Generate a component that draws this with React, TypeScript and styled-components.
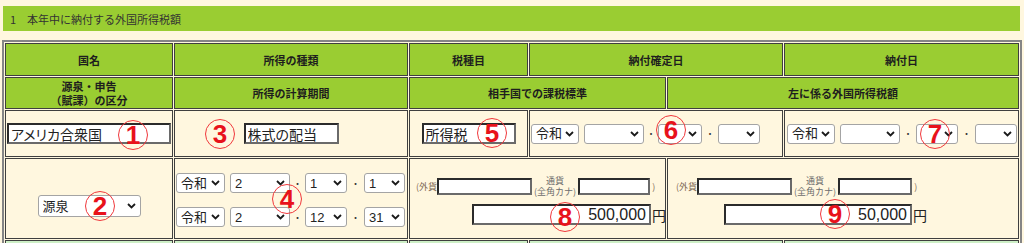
import React from "react";
import styled, { createGlobalStyle } from "styled-components";

const GlobalStyle = createGlobalStyle`
  body {
    margin: 0;
    background: #fff7df;
    color: #222;
    font-family: "Liberation Sans", "Noto Sans CJK JP", sans-serif;
  }
`;

const Page = styled.div`
  padding-top: 6px;
`;

const SectionBar = styled.div`
  box-sizing: border-box;
  margin-left: 3px;
  width: 1017px;
  height: 25px;
  padding-left: 7px;
  display: flex;
  align-items: center;
  background: #9acd32;
  color: #333;
  font: 11px "Noto Sans CJK JP", sans-serif;
`;

const Grid = styled.div`
  margin: 9px 0 0 2px;
  width: 1014px;
  display: grid;
  grid-template-columns: 168px 234px 119px 137px 116px 235px;
  grid-template-rows: 33px 32px 47px 81px 30px;
  gap: 1px;
  padding: 1px;
  border: 2px solid #858585;
  background: #fff7df;
`;

type Tone = "head" | "body" | "foot";

const toneColor: Record<Tone, string> = {
  head: "#9acd32",
  body: "#fff7df",
  foot: "#cdefc6",
};

const Cell = styled.div<{ $span?: number; $tone?: Tone }>`
  box-sizing: border-box;
  position: relative;
  grid-column: span ${({ $span }) => $span ?? 1};
  border: 1px solid #3f3f3f;
  background: ${({ $tone }) => toneColor[$tone ?? "body"]};
`;

const HeadCell = styled(Cell).attrs({ $tone: "head" as Tone })`
  display: flex;
  flex-direction: column;
  align-items: center;
  justify-content: center;
  text-align: center;
  font: 700 11px/14px "Noto Sans CJK JP", sans-serif;
  color: #1e1e1e;
`;

const CenterCell = styled(Cell)`
  display: flex;
  align-items: center;
  justify-content: center;
`;

const DateCell = styled(Cell)<{ $pad: number }>`
  display: flex;
  align-items: center;
  padding-left: ${({ $pad }) => $pad}px;
`;

const KindCell = styled(Cell)`
  display: flex;
  justify-content: center;
  align-items: flex-start;
  padding-top: 36px;
`;

const PeriodCell = styled(Cell)`
  display: flex;
  flex-direction: column;
  gap: 14px;
  padding: 14px 0 0 1px;
`;

const AmountCell = styled(Cell)<{ $pad: number }>`
  display: flex;
  flex-direction: column;
  gap: 7px;
  padding: 16px 0 0 ${({ $pad }) => $pad}px;
`;

const TextBox = styled.input<{ $w: number; $h?: number; $right?: boolean }>`
  box-sizing: border-box;
  width: ${({ $w }) => $w}px;
  height: ${({ $h }) => $h ?? 21}px;
  margin: 0;
  padding: ${({ $right }) => ($right ? "0 3px 0 2px" : "0 2px")};
  border: 2px solid;
  border-color: #2b2b2b #6a6a6a #6a6a6a #2b2b2b;
  background: #fff;
  color: #222;
  font-family: "Liberation Sans", "Noto Sans CJK JP", sans-serif;
  font-size: ${({ $right }) => ($right ? 16 : 14)}px;
  font-feature-settings: "palt";
  text-align: ${({ $right }) => ($right ? "right" : "left")};
  outline: none;
`;

const SelectWrap = styled.span<{ $w: number; $h?: number }>`
  position: relative;
  display: inline-flex;
  flex: none;
  width: ${({ $w }) => $w}px;
  height: ${({ $h }) => $h ?? 20}px;
`;

const NativeSelect = styled.select`
  appearance: none;
  box-sizing: border-box;
  width: 100%;
  height: 100%;
  margin: 0;
  padding: 0 14px 0 4px;
  border: 1px solid #a4a4a4;
  border-radius: 3px;
  background: #fff;
  color: #222;
  font-family: "Liberation Sans", "Noto Sans CJK JP", sans-serif;
  font-size: 13px;
  outline: none;
`;

const Chevron = styled.svg`
  position: absolute;
  right: 5px;
  top: 50%;
  margin-top: -3px;
  width: 9px;
  height: 6px;
  pointer-events: none;
`;

type SelectProps = {
  w: number;
  h?: number;
  value: string;
  options?: string[];
};

function Select({ w, h, value, options }: SelectProps) {
  const list = options ?? [value];
  return (
    <SelectWrap $w={w} $h={h}>
      <NativeSelect defaultValue={value}>
        {list.map((o) => (
          <option key={o} value={o}>
            {o}
          </option>
        ))}
      </NativeSelect>
      <Chevron viewBox="0 0 9 6">
        <path d="M1 1 L4.5 4.5 L8 1" fill="none" stroke="#1a1a1a" strokeWidth="1.8" />
      </Chevron>
    </SelectWrap>
  );
}

const Dot = styled.span<{ $w: number }>`
  width: ${({ $w }) => $w}px;
  flex: none;
  text-align: center;
  font-size: 9px;
  color: #333;
`;

const DateRow = styled.div`
  display: flex;
  align-items: center;
`;

const EraGap = styled.span`
  width: 5px;
  flex: none;
`;

const Line = styled.div<{ $indent?: number }>`
  display: flex;
  align-items: center;
  padding-left: ${({ $indent }) => $indent ?? 0}px;
`;

const SmallNote = styled.span`
  font: 9px/11px "Noto Sans CJK JP", sans-serif;
  color: #7f6a55;
  white-space: nowrap;
`;

const CurrencyNote = styled.span`
  display: flex;
  flex-direction: column;
  align-items: center;
  padding: 0 2px;
  font: 9px/11px "Noto Sans CJK JP", sans-serif;
  color: #6d6d6d;
  white-space: nowrap;
`;

const Yen = styled.span`
  margin-left: 1px;
  font: 14px "Noto Sans CJK JP", sans-serif;
  color: #222;
`;

const Badge = styled.span<{ $x: number; $y: number }>`
  position: absolute;
  left: ${({ $x }) => $x}px;
  top: ${({ $y }) => $y}px;
  box-sizing: border-box;
  width: 30px;
  height: 30px;
  border: 1.5px solid #f0383c;
  border-radius: 50%;
  display: flex;
  align-items: center;
  justify-content: center;
  color: #e8121b;
  font: 700 26px/1 "Liberation Sans", sans-serif;
  pointer-events: none;
`;

type DateProps = {
  values: [string, string, string, string];
  widths: [number, number, number, number];
  dots?: [number, number];
};

function DateSelects({ values, widths, dots = [14, 16] }: DateProps) {
  return (
    <DateRow>
      <Select w={widths[0]} value={values[0]} options={["令和", "平成"]} />
      <EraGap />
      <Select w={widths[1]} value={values[1]} />
      <Dot $w={dots[0]}>・</Dot>
      <Select w={widths[2]} value={values[2]} />
      <Dot $w={dots[1]}>・</Dot>
      <Select w={widths[3]} value={values[3]} />
    </DateRow>
  );
}

type AmountProps = {
  pad: number;
  foreignW: number;
  currencyW: number;
  amountW: number;
  indent: number;
  amount: string;
  mark: string;
  markX: number;
  markY: number;
};

function AmountBlock(p: AmountProps) {
  return (
    <AmountCell $span={2} $pad={p.pad}>
      <Line>
        <SmallNote>(外貨</SmallNote>
        <TextBox $w={p.foreignW} $h={17} defaultValue="" />
        <CurrencyNote>
          <span>通貨</span>
          <span>(全角カナ)</span>
        </CurrencyNote>
        <TextBox $w={p.currencyW} $h={17} defaultValue="" />
        <SmallNote>&nbsp;)</SmallNote>
      </Line>
      <Line $indent={p.indent}>
        <TextBox $w={p.amountW} $right defaultValue={p.amount} />
        <Yen>円</Yen>
      </Line>
      <Badge $x={p.markX} $y={p.markY}>{p.mark}</Badge>
    </AmountCell>
  );
}

export default function App() {
  return (
    <Page>
      <GlobalStyle />
      <SectionBar>1　本年中に納付する外国所得税額</SectionBar>
      <Grid>
        <HeadCell>国名</HeadCell>
        <HeadCell>所得の種類</HeadCell>
        <HeadCell>税種目</HeadCell>
        <HeadCell $span={2}>納付確定日</HeadCell>
        <HeadCell>納付日</HeadCell>

        <HeadCell>
          <span>源泉・申告</span>
          <span>（賦課）の区分</span>
        </HeadCell>
        <HeadCell>所得の計算期間</HeadCell>
        <HeadCell $span={2}>相手国での課税標準</HeadCell>
        <HeadCell $span={2}>左に係る外国所得税額</HeadCell>

        <DateCell $pad={1}>
          <TextBox $w={164} defaultValue="アメリカ合衆国" />
          <Badge $x={112} $y={9}>1</Badge>
        </DateCell>
        <CenterCell>
          <TextBox $w={95} defaultValue="株式の配当" />
          <Badge $x={30} $y={8}>3</Badge>
        </CenterCell>
        <CenterCell>
          <TextBox $w={94} defaultValue="所得税" />
          <Badge $x={67} $y={7}>5</Badge>
        </CenterCell>
        <DateCell $span={2} $pad={1}>
          <DateSelects values={["令和", "", "", ""]} widths={[48, 60, 44, 42]} />
          <Badge $x={126} $y={4}>6</Badge>
        </DateCell>
        <DateCell $pad={2}>
          <DateSelects values={["令和", "", "", ""]} widths={[48, 60, 42, 42]} dots={[16, 17]} />
          <Badge $x={135} $y={8}>7</Badge>
        </DateCell>

        <KindCell>
          <Select w={103} h={22} value="源泉" options={["源泉", "申告"]} />
          <Badge $x={79} $y={32}>2</Badge>
        </KindCell>
        <PeriodCell>
          <DateSelects values={["令和", "2", "1", "1"]} widths={[49, 60, 42, 41]} dots={[15, 17]} />
          <DateSelects values={["令和", "2", "12", "31"]} widths={[49, 60, 42, 41]} dots={[15, 17]} />
          <Badge $x={97} $y={25}>4</Badge>
        </PeriodCell>
        <AmountBlock
          pad={6}
          foreignW={95}
          currencyW={72}
          amountW={179}
          indent={56}
          amount="500,000"
          mark="8"
          markX={140}
          markY={43}
        />
        <AmountBlock
          pad={8}
          foreignW={95}
          currencyW={74}
          amountW={188}
          indent={48}
          amount="50,000"
          mark="9"
          markX={152}
          markY={40}
        />

        <Cell $tone="foot" />
        <Cell $tone="foot" />
        <Cell $tone="foot" />
        <Cell $tone="foot" $span={2} />
        <Cell $tone="foot" />
      </Grid>
    </Page>
  );
}
